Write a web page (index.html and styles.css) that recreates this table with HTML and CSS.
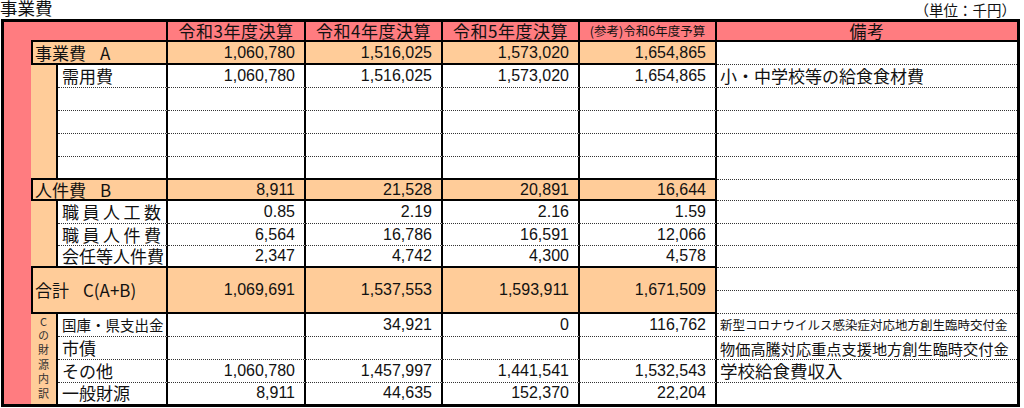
FILE: index.html
```html
<!DOCTYPE html>
<html lang="ja">
<head>
<meta charset="utf-8">
<title>事業費</title>
<link rel="stylesheet" href="styles.css">
</head>
<body>
<div class="titlebar"><span class="title">事業費</span><span class="unit">（単位：千円）</span></div>
<table class="budget">
  <colgroup>
    <col class="c-strip"><col class="c-indent"><col class="c-label">
    <col class="c-num1"><col class="c-num"><col class="c-num"><col class="c-num">
    <col class="c-remark">
  </colgroup>
  <tr class="h20">
    <td class="strip" rowspan="17"></td>
    <td class="head-label" colspan="2"></td>
    <th>令和3年度決算</th>
    <th>令和4年度決算</th>
    <th>令和5年度決算</th>
    <th class="small">(参考)令和6年度予算</th>
    <th class="last">備考</th>
  </tr>
  <tr class="h23">
    <td class="lv1" colspan="2">事業費<span class="gap"></span>A</td>
    <td class="v1">1,060,780</td><td class="v1">1,516,025</td><td class="v1">1,573,020</td><td class="v1">1,654,865</td>
    <td class="rm"></td>
  </tr>
  <tr class="h23">
    <td class="indent" rowspan="5"></td>
    <td class="sub">需用費</td>
    <td class="v">1,060,780</td><td class="v">1,516,025</td><td class="v">1,573,020</td><td class="v">1,654,865</td>
    <td class="rm">小・中学校等の給食食材費</td>
  </tr>
  <tr class="h23"><td class="sub"></td><td class="v"></td><td class="v"></td><td class="v"></td><td class="v"></td><td class="rm"></td></tr>
  <tr class="h23"><td class="sub"></td><td class="v"></td><td class="v"></td><td class="v"></td><td class="v"></td><td class="rm"></td></tr>
  <tr class="h23"><td class="sub"></td><td class="v"></td><td class="v"></td><td class="v"></td><td class="v"></td><td class="rm"></td></tr>
  <tr class="h23 solid"><td class="sub"></td><td class="v"></td><td class="v"></td><td class="v"></td><td class="v"></td><td class="rm"></td></tr>
  <tr class="h21">
    <td class="lv1" colspan="2">人件費<span class="gap"></span>B</td>
    <td class="v1">8,911</td><td class="v1">21,528</td><td class="v1">20,891</td><td class="v1">16,644</td>
    <td class="rm"></td>
  </tr>
  <tr class="h23">
    <td class="indent" rowspan="3"></td>
    <td class="sub dist">職員人工数</td>
    <td class="v">0.85</td><td class="v">2.19</td><td class="v">2.16</td><td class="v">1.59</td>
    <td class="rm"></td>
  </tr>
  <tr class="h22">
    <td class="sub dist">職員人件費</td>
    <td class="v">6,564</td><td class="v">16,786</td><td class="v">16,591</td><td class="v">12,066</td>
    <td class="rm"></td>
  </tr>
  <tr class="h22 solid">
    <td class="sub dist">会任等人件費</td>
    <td class="v">2,347</td><td class="v">4,742</td><td class="v">4,300</td><td class="v">4,578</td>
    <td class="rm"></td>
  </tr>
  <tr class="h23">
    <td class="lv1" colspan="2" rowspan="2">合計<span class="gap"></span>C(A+B)</td>
    <td class="v1" rowspan="2">1,069,691</td><td class="v1" rowspan="2">1,537,553</td><td class="v1" rowspan="2">1,593,911</td><td class="v1" rowspan="2">1,671,509</td>
    <td class="rm"></td>
  </tr>
  <tr class="h23"><td class="rm"></td></tr>
  <tr class="h22">
    <td class="indent end" rowspan="4"><span class="vtext">Cの財源内訳</span></td>
    <td class="sub shrink">国庫・県支出金</td>
    <td class="v"></td><td class="v">34,921</td><td class="v">0</td><td class="v">116,762</td>
    <td class="rm rm-xs">新型コロナウイルス感染症対応地方創生臨時交付金</td>
  </tr>
  <tr class="h22">
    <td class="sub">市債</td>
    <td class="v"></td><td class="v"></td><td class="v"></td><td class="v"></td>
    <td class="rm rm-s">物価高騰対応重点支援地方創生臨時交付金</td>
  </tr>
  <tr class="h22">
    <td class="sub">その他</td>
    <td class="v">1,060,780</td><td class="v">1,457,997</td><td class="v">1,441,541</td><td class="v">1,532,543</td>
    <td class="rm rm-l">学校給食費収入</td>
  </tr>
  <tr class="h21 last">
    <td class="sub">一般財源</td>
    <td class="v">8,911</td><td class="v">44,635</td><td class="v">152,370</td><td class="v">22,204</td>
    <td class="rm"></td>
  </tr>
</table>
</body>
</html>
```

FILE: styles.css
```css
* { box-sizing: border-box; }
html, body { margin: 0; padding: 0; background: #fff; }
body {
  width: 1024px;
  height: 408px;
  overflow: hidden;
  font-family: "Noto Sans CJK JP", "Noto Sans", sans-serif;
  color: #111;
}

.titlebar {
  display: flex;
  justify-content: space-between;
  align-items: flex-start;
  height: 19px;
  padding-right: 8px;
}
.title { font-size: 17.5px; line-height: 19px; margin-top: -2px; }
.unit { font-size: 14.5px; line-height: 18px; padding-top: 1px; }

.budget {
  margin-left: 1px;
  width: 1019px;
  table-layout: fixed;
  border-collapse: separate;
  border-spacing: 0;
  border: 3px solid #000;
}
.c-strip { width: 27px; }
.c-indent { width: 27px; }
.c-label { width: 110px; }
.c-num1 { width: 138px; }
.c-num { width: 137px; }
.c-remark { width: 300px; }

.h23 { height: 23px; }
.h22 { height: 22px; }
.h21 { height: 21px; }
.h20 { height: 20px; }

td, th {
  padding: 0;
  border: 0;
  font-weight: normal;
  line-height: 18px;
  white-space: nowrap;
  vertical-align: middle;
}

th {
  background: #ff7c80;
  border-right: 2px solid #000;
  border-bottom: 2px solid #000;
  font-size: 17px;
  letter-spacing: 0.5px;
  text-align: center;
}
th.small { font-size: 12.5px; letter-spacing: 0; }
th.last { border-right: 0; }

.strip { background: #ff7c80; }
.head-label {
  background: #ff7c80;
  border-right: 2px solid #000;
  border-bottom: 2px solid #000;
}

.lv1 {
  background: #ffcc99;
  border-left: 2px solid #000;
  border-right: 2px solid #000;
  border-bottom: 2px solid #000;
  font-size: 17px;
  padding-left: 2px;
}
.gap { display: inline-block; width: 14px; }

.v1, .v {
  font-family: "Liberation Sans", "Noto Sans CJK JP", sans-serif;
  font-size: 16px;
  text-align: right;
  padding-right: 9px;
}
.v1 {
  background: #ffcc99;
  border-right: 2px solid #000;
  border-bottom: 2px solid #000;
}

.indent {
  background: #ffcc99;
  border-right: 2px solid #000;
  border-bottom: 2px solid #000;
  text-align: center;
}
.indent.end { border-bottom: 0; }
.vtext {
  display: inline-block;
  writing-mode: vertical-rl;
  text-orientation: upright;
  font-size: 11px;
  line-height: 12px;
  letter-spacing: 3.4px;
  color: #333;
  padding-top: 2px;
}

.sub, .v {
  background: #fff;
  border-right: 2px solid #000;
  border-bottom: 1px dotted #333;
}
.solid .sub, .solid .v { border-bottom: 2px solid #000; }
.last .sub, .last .v, .last .rm { border-bottom: 0; }

.sub { font-size: 17px; padding-left: 4px; }
.dist { text-align: justify; text-align-last: justify; padding-right: 5px; }
.shrink { font-size: 14.5px; }

.rm {
  background: #fff;
  border-bottom: 1px dotted #333;
  font-size: 17px;
  padding-left: 3px;
}
.rm-xs { font-size: 12.5px; }
.rm-s { font-size: 15.2px; }
.rm-l { font-size: 17.5px; }
```
